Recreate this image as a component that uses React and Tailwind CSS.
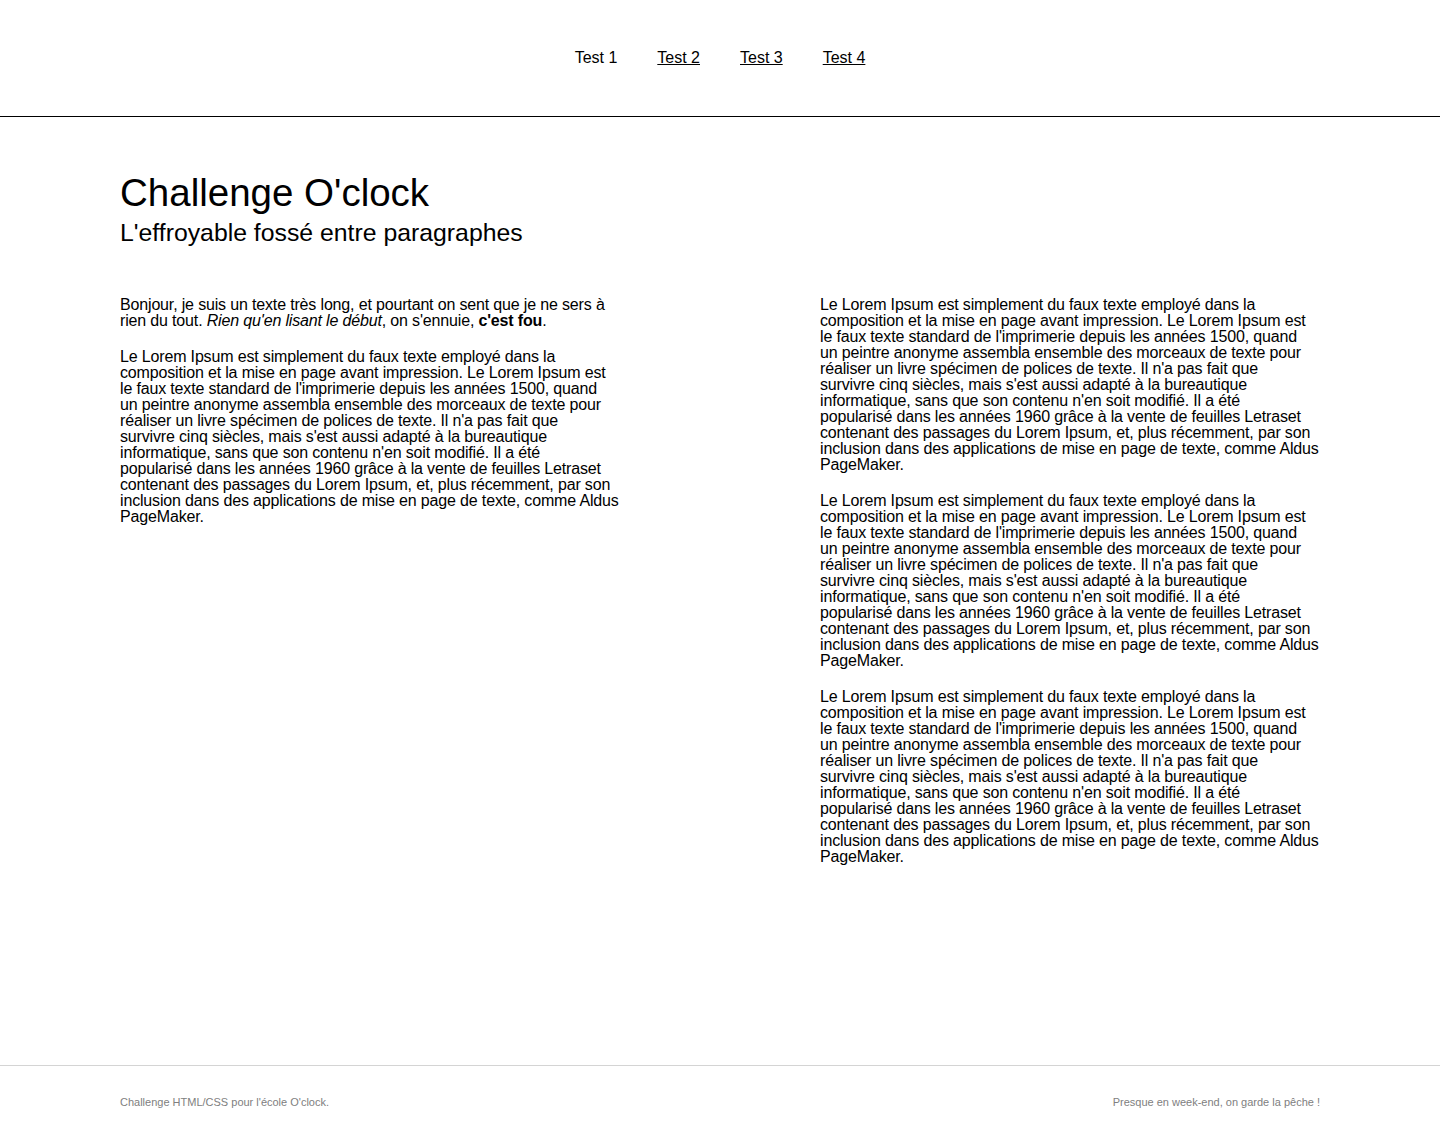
import React from "react";

// line breaks follow the reference wrapping
const loremLines = [
  "Le Lorem Ipsum est simplement du faux texte employé dans la",
  "composition et la mise en page avant impression. Le Lorem Ipsum est",
  "le faux texte standard de l'imprimerie depuis les années 1500, quand",
  "un peintre anonyme assembla ensemble des morceaux de texte pour",
  "réaliser un livre spécimen de polices de texte. Il n'a pas fait que",
  "survivre cinq siècles, mais s'est aussi adapté à la bureautique",
  "informatique, sans que son contenu n'en soit modifié. Il a été",
  "popularisé dans les années 1960 grâce à la vente de feuilles Letraset",
  "contenant des passages du Lorem Ipsum, et, plus récemment, par son",
  "inclusion dans des applications de mise en page de texte, comme Aldus",
  "PageMaker.",
];

const font = { fontFamily: "'Liberation Sans', Arial, sans-serif" };

const Lorem = () => (
  <p className="whitespace-nowrap">
    {loremLines.map((line, i) => (
      <React.Fragment key={i}>
        {line}
        {i < loremLines.length - 1 && <br />}
      </React.Fragment>
    ))}
  </p>
);

const App = () => {
  return (
    <div className="min-h-screen flex flex-col bg-white text-black" style={font}>
      <header className="h-[117px] border-b border-black flex items-center justify-center">
        <nav className="flex gap-10 text-[16px]">
          <span>Test 1</span>
          <a href="#" className="underline">Test 2</a>
          <a href="#" className="underline">Test 3</a>
          <a href="#" className="underline">Test 4</a>
        </nav>
      </header>

      <main className="flex-1 w-[1200px] mx-auto pt-[54px]">
        <h1 className="text-[38.5px] leading-[44px]">Challenge O'clock</h1>
        <h2 className="text-[24.8px] leading-[28px] mt-[4px]">L'effroyable fossé entre paragraphes</h2>

        <div className="flex justify-between mt-[50px] text-[16px] leading-[16px] tracking-[-0.16px]">
          <div className="w-[500px] flex flex-col gap-5">
            <p className="whitespace-nowrap">
              Bonjour, je suis un texte très long, et pourtant on sent que je ne sers à
              <br />
              rien du tout. <em>Rien qu'en lisant le début</em>, on s'ennuie, <strong>c'est fou</strong>.
            </p>
            <Lorem />
          </div>
          <div className="w-[500px] flex flex-col gap-5">
            <Lorem />
            <Lorem />
            <Lorem />
          </div>
        </div>
      </main>

      <footer className="border-t border-[#d4d4d4] h-[72px]">
        <div className="w-[1200px] mx-auto flex justify-between pt-[28px] text-[11px] text-[#808080]">
          <p>Challenge HTML/CSS pour l'école O'clock.</p>
          <p>Presque en week-end, on garde la pêche !</p>
        </div>
      </footer>
    </div>
  );
};

export default App;
